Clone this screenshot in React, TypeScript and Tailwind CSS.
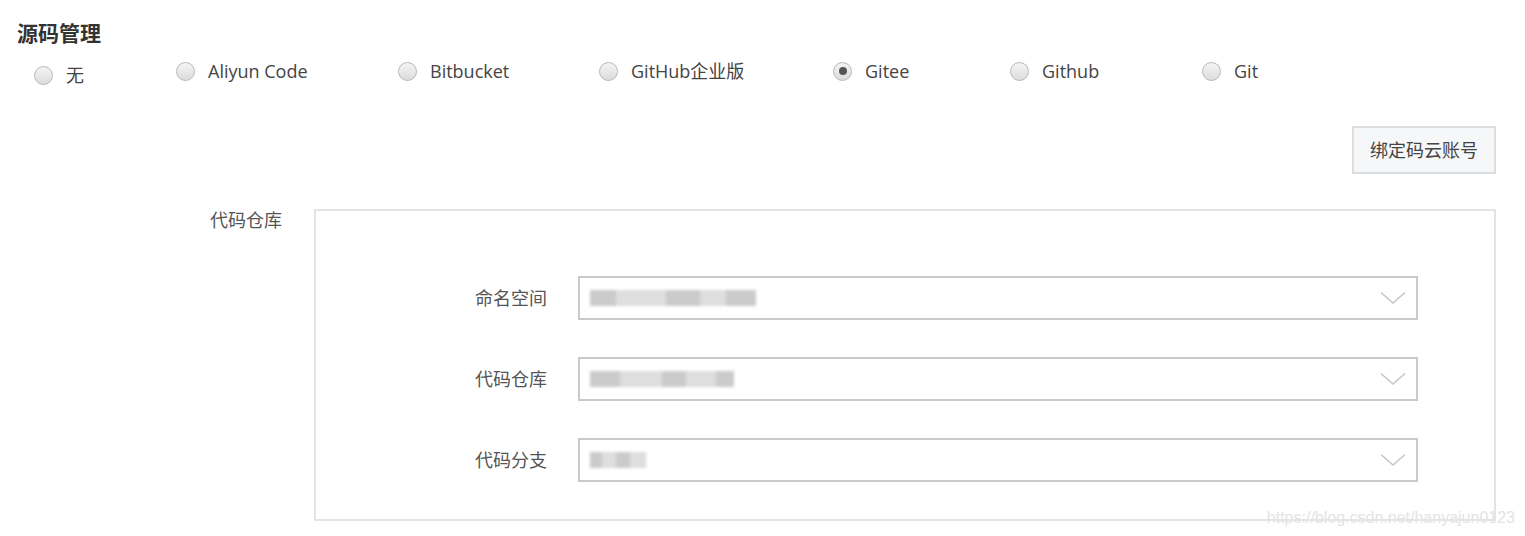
import React from 'react';

const SOURCES = [
  { label: '无', width: 'w-[142px]', low: true },
  { label: 'Aliyun Code', width: 'w-[222px]' },
  { label: 'Bitbucket', width: 'w-[201px]' },
  { label: 'GitHub企业版', width: 'w-[234px]' },
  { label: 'Gitee', width: 'w-[177px]', checked: true },
  { label: 'Github', width: 'w-[192px]' },
  { label: 'Git', width: 'w-[120px]' },
];

const FIELDS = [
  { label: '命名空间', blur: [26, 50, 34, 26, 30] },
  { label: '代码仓库', blur: [30, 42, 24, 30, 18] },
  { label: '代码分支', blur: [12, 14, 14, 16] },
];

const Radio: React.FC<{ checked?: boolean }> = ({ checked }) => (
  <span className="w-[19px] h-[19px] rounded-full border border-[#b9b9b9] bg-gradient-to-b from-[#f4f4f4] to-[#dcdcdc] flex items-center justify-center shrink-0">
    {checked && <span className="w-[8px] h-[8px] rounded-full bg-[#555]" />}
  </span>
);

const Chevron = () => (
  <svg width="26" height="14" viewBox="0 0 26 14" fill="none" className="shrink-0">
    <polyline points="1,1.5 13,12 25,1.5" stroke="#c6c6c6" strokeWidth="1.6" />
  </svg>
);

const App: React.FC = () => {
  return (
    <div
      className="relative w-[1525px] h-[536px] bg-white text-[#333] overflow-hidden"
      style={{ fontFamily: '"Open Sans", "Noto Sans CJK SC", sans-serif' }}
    >
      {/* Header */}
      <h2 className="pl-[17px] pt-[20px] text-[21px] leading-[26px] font-bold text-[#333]">源码管理</h2>

      {/* Source radios */}
      <div className="flex pl-[34px] mt-[11px] h-[28px] items-center">
        {SOURCES.map((s) => (
          <label key={s.label} className={`${s.width} flex items-center gap-[13px] ${s.low ? 'pt-[8px]' : ''}`}>
            <Radio checked={s.checked} />
            <span className="text-[18px] text-[#444] leading-none">{s.label}</span>
          </label>
        ))}
      </div>

      {/* Bind account */}
      <div className="flex justify-end pr-[29px] mt-[41px]">
        <button className="w-[144px] h-[48px] border-2 border-[#dcdfe2] bg-[#f6f7f8] text-[18px] text-[#444]">
          绑定码云账号
        </button>
      </div>

      {/* Repository */}
      <div className="flex mt-[35px] pr-[29px]">
        <div className="w-[314px] pl-[210px] text-[18px] text-[#555] leading-[22px]">代码仓库</div>
        <div className="flex-1 h-[312px] border-2 border-[#e4e4e4] pt-[65px] flex flex-col gap-[37px]">
          {FIELDS.map((f) => (
            <div key={f.label} className="flex items-center">
              <div className="w-[231px] text-right text-[18px] text-[#555]">{f.label}</div>
              <div className="ml-[31px] w-[840px] h-[44px] border-2 border-[#c9c9c9] flex items-center justify-between pl-[10px] pr-[10px]">
                <div className="flex items-center h-[22px] blur-[1.5px]">
                  {f.blur.map((w, i) => (
                    <span
                      key={i}
                      className={`h-[16px] ${i % 2 === 0 ? 'bg-[#cbcbcb]' : 'bg-[#dedede]'}`}
                      style={{ width: w }}
                    />
                  ))}
                </div>
                <Chevron />
              </div>
            </div>
          ))}
        </div>
      </div>

      {/* Watermark */}
      <div className="absolute right-[10px] bottom-[6px] text-[16px] text-[#e4e4e4]" style={{ fontFamily: '"Liberation Sans", sans-serif' }}>
        https://blog.csdn.net/hanyajun0123
      </div>
    </div>
  );
};

export default App;
